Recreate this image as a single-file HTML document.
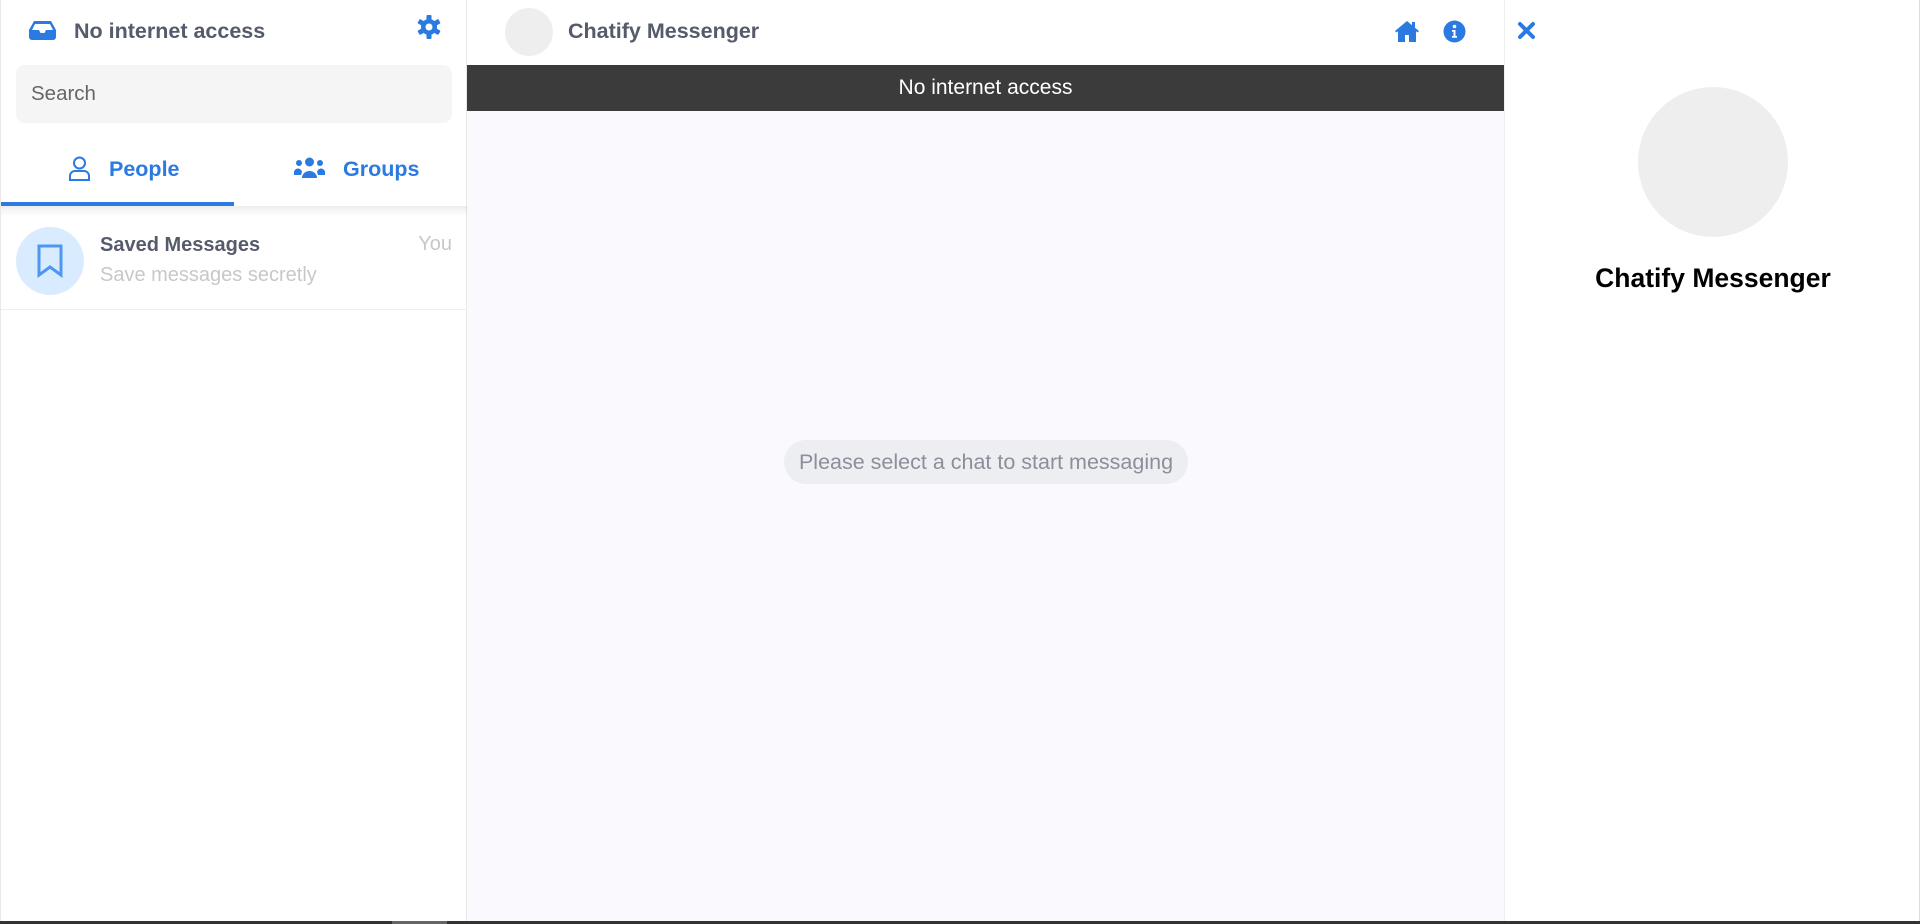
<!DOCTYPE html>
<html><head><meta charset="utf-8"><style>
*{box-sizing:border-box;margin:0;padding:0}
body{width:1920px;height:924px;overflow:hidden;font-family:"Liberation Sans",Arial,sans-serif;background:#fff;position:relative}
.abs{position:absolute}
.left{left:0;top:0;width:467px;height:921px;border-left:1px solid #e8e8e8;border-right:1px solid #e8e8e8;background:#fff}
.mid{left:467px;top:0;width:1037px;height:921px;background:#f9f9fe}
.right{left:1504px;top:0;width:416px;height:921px;border-left:1px solid #eee;border-right:1px solid #ddd;background:#fff}
.bb{left:0;top:921px;width:1920px;height:3px;background:#333}
</style></head><body>
<div class="abs left">
 <svg class="abs" style="left:28px;top:21px" width="27" height="19" viewBox="0 0 27 19"><path d="M5 0h17l5 9v7a3 3 0 0 1-3 3H3a3 3 0 0 1-3-3V9z" fill="#2a7ae2"/><path d="M6 3h15l3 6h-7l-1.5 3h-4L10 9H3z" fill="#fff"/></svg>
 <div class="abs" style="left:73px;top:19px;font-size:21.5px;font-weight:bold;color:#555b6b">No internet access</div>
 <svg class="abs" style="left:416px;top:15px" width="24" height="24" viewBox="0 0 24 24"><g fill="#2a7ae2"><circle cx="12" cy="12" r="8"/><rect x="9.5" y="0" width="5" height="24" rx="1"/><rect x="9.5" y="0" width="5" height="24" rx="1" transform="rotate(60 12 12)"/><rect x="9.5" y="0" width="5" height="24" rx="1" transform="rotate(120 12 12)"/></g><circle cx="12" cy="12" r="3.5" fill="#fff"/></svg>
 <div class="abs" style="left:15px;top:65px;width:436px;height:58px;background:#f5f5f5;border-radius:9px;font-size:20.5px;color:#666;padding:17px 0 0 15px">Search</div>
 <svg class="abs" style="left:67px;top:156px" width="23" height="25" viewBox="0 0 23 25"><circle cx="11.5" cy="7" r="5.5" fill="none" stroke="#2a7ae2" stroke-width="2"/><path d="M2 24v-4a5 5 0 0 1 5-5h9a5 5 0 0 1 5 5v4z" fill="none" stroke="#2a7ae2" stroke-width="2"/></svg>
 <div class="abs" style="left:108px;top:157px;font-size:21.5px;font-weight:bold;color:#2a7ae2">People</div>
 <svg class="abs" style="left:293px;top:157px" width="31" height="22" viewBox="0 0 31 22"><g fill="#2a7ae2"><circle cx="15.5" cy="5" r="4.5"/><circle cx="5" cy="6" r="3"/><circle cx="26" cy="6" r="3"/><path d="M8 21a7.5 7 0 0 1 15 0z"/><path d="M0 16a4 4 0 0 1 8-1l-1 3H0zM31 16a4 4 0 0 0-8-1l1 3h7z"/></g></svg>
 <div class="abs" style="left:342px;top:157px;font-size:21.5px;font-weight:bold;color:#2a7ae2">Groups</div>
 <div class="abs" style="left:0;top:206px;width:466px;height:10px;background:linear-gradient(#00000012,#0000)"></div>
 <div class="abs" style="left:0;top:202px;width:233px;height:4px;background:#2a7ae2"></div>
 <div class="abs" style="left:15px;top:227px;width:68px;height:68px;border-radius:50%;background:#d9ecff"></div>
 <svg class="abs" style="left:36px;top:244px" width="26" height="34" viewBox="0 0 26 34"><path d="M2 2h22v29l-11-8-11 8z" fill="none" stroke="#4f96f0" stroke-width="3"/></svg>
 <div class="abs" style="left:99px;top:234px;font-size:20px;font-weight:bold;color:#555b6b">Saved Messages</div>
 <div class="abs" style="right:14px;top:233px;font-size:20px;color:#c8c8c8">You</div>
 <div class="abs" style="left:99px;top:264px;font-size:20px;color:#c8c8c8">Save messages secretly</div>
 <div class="abs" style="left:0;top:309px;width:466px;height:1px;background:#eee"></div>
</div>
<div class="abs mid">
 <div class="abs" style="left:0;top:0;width:1037px;height:65px;background:#fff"></div>
 <div class="abs" style="left:38px;top:8px;width:48px;height:48px;border-radius:50%;background:#eee"></div>
 <div class="abs" style="left:101px;top:19px;font-size:21.5px;font-weight:bold;color:#555b6b">Chatify Messenger</div>
 <svg class="abs" style="left:927px;top:20px" width="26" height="22" viewBox="0 0 26 22"><path d="M13 1L1 11l1.5 1.5L4 11.3V22h7v-7h4v7h7V11.3l1.5 1.2L25 11 21 7.7V2h-3v3.2z" fill="#2a7ae2"/></svg>
 <svg class="abs" style="left:976px;top:20px" width="23" height="23" viewBox="0 0 23 23"><circle cx="11.5" cy="11.5" r="11" fill="#2a7ae2"/><circle cx="11.5" cy="6.5" r="1.8" fill="#fff"/><path d="M9 10h3.5v6H14v1.8H9V16h1.5v-4.2H9z" fill="#fff"/></svg>
 <div class="abs" style="left:0;top:65px;width:1037px;height:46px;background:#3b3b3b;color:#fff;font-size:21px;text-align:center;line-height:46px">No internet access</div>
 <div class="abs" style="left:317px;top:440px;width:404px;height:44px;border-radius:22px;background:#eceef2;color:#8a8f99;font-size:21.5px;text-align:center;line-height:44px">Please select a chat to start messaging</div>
</div>
<div class="abs right">
 <svg class="abs" style="left:12px;top:21px" width="19" height="19" viewBox="0 0 19 19"><path d="M3 3l13 13M16 3L3 16" stroke="#2a7ae2" stroke-width="4" stroke-linecap="round"/></svg>
 <div class="abs" style="left:133px;top:87px;width:150px;height:150px;border-radius:50%;background:#eee"></div>
 <div class="abs" style="left:0;top:263px;width:416px;font-size:26.5px;font-weight:bold;color:#000;text-align:center">Chatify Messenger</div>
</div>
<div class="abs bb"></div>
<div class="abs" style="left:392px;top:921px;width:55px;height:3px;background:#666"></div>
</body></html>
